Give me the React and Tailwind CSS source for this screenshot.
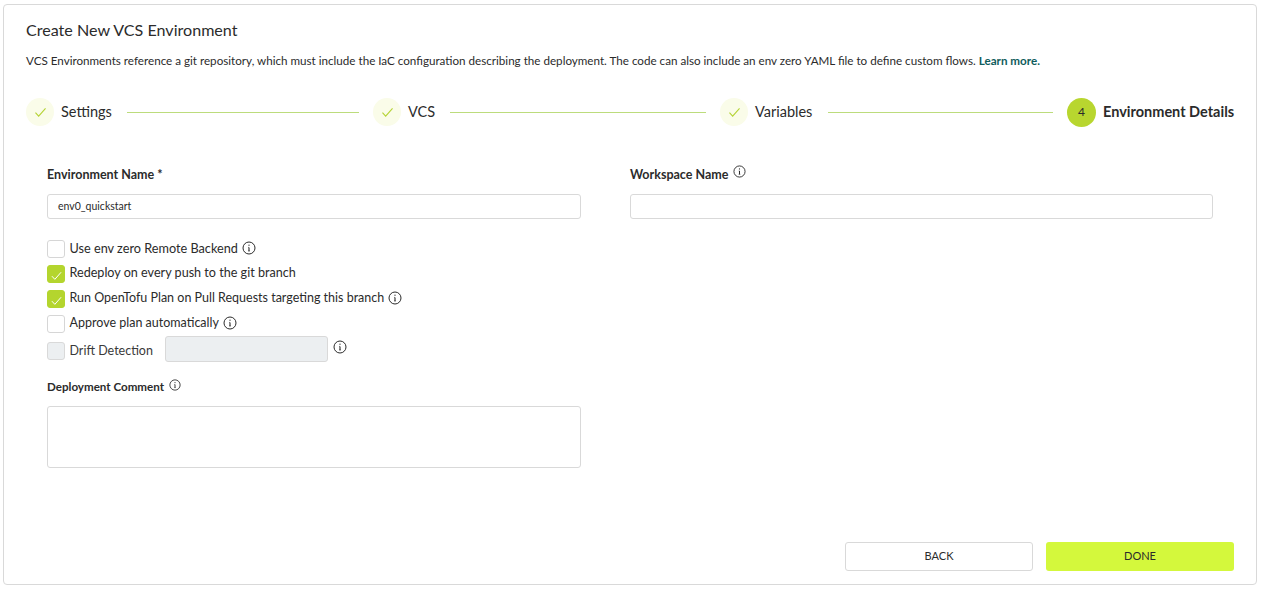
function Info({ className = "" }) {
  return (
    <svg viewBox="0 0 14 14" className={`shrink-0 ${className}`} fill="none" stroke="#2b2b2b" strokeWidth="1">
      <circle cx="7" cy="7" r="6" />
      <path d="M7 6.4v3.6" strokeWidth="1.1" />
      <path d="M6.2 6.4H7M6.1 10h1.8" strokeWidth="0.7" />
      <circle cx="7" cy="4.2" r="0.65" fill="#2b2b2b" stroke="none" />
    </svg>
  );
}

function Check({ className = "", color = "#b5d335" }) {
  return (
    <svg viewBox="0 0 14 12" className={className} fill="none" stroke={color} strokeWidth="1.2">
      <path d="M1.5 6.2 5 10 12.5 1.5" />
    </svg>
  );
}

function DoneStep({ label, labelWidth }) {
  return (
    <div className="flex items-center shrink-0">
      <div className="w-[28px] h-[28px] rounded-full bg-[#fafce9] flex items-center justify-center">
        <Check className="w-[13px] h-[11px]" />
      </div>
      <span className={`ml-[7px] text-[14.5px] leading-[20px] text-[#2b2b2b] ${labelWidth}`}>{label}</span>
    </div>
  );
}

function Box({ checked, disabled, className = "" }) {
  return (
    <span
      className={`w-[18px] h-[18px] rounded-[3px] shrink-0 flex items-center justify-center border ${
        checked
          ? "bg-[#b4d52e] border-[#b4d52e]"
          : disabled
          ? "bg-[#eceff1] border-[#d9d9d9]"
          : "bg-white border-[#d6d6d6]"
      } ${className}`}
    >
      {checked && <Check className="w-[13px] h-[10px] mt-[4px]" color="#ffffff" />}
    </span>
  );
}

function CheckRow({ label, checked, info, size = "text-[12.6px]" }) {
  return (
    <div className="flex items-center h-[25px]">
      <Box checked={checked} />
      <span className={`ml-[4.5px] text-[#2b2b2b] ${size}`}>{label}</span>
      {info && <Info className="ml-[4px] -mt-[2px] w-[14px] h-[14px]" />}
    </div>
  );
}

export default function App() {
  return (
    <div className="w-[1266px] h-[589px] bg-white pt-[4px] pl-[3px] font-['Lato','Liberation_Sans',sans-serif] overflow-hidden">
      <div className="w-[1254px] h-[581px] border border-[#d9d9d9] rounded-[4px] flex flex-col">
        <div className="pl-[22px] pt-[15px]">
          <h1 className="text-[16.1px] leading-[20px] font-normal text-[#2b2b2b]">Create New VCS Environment</h1>
          <p className="mt-[13px] text-[11.65px] leading-[16px] text-[#2b2b2b] whitespace-nowrap">
            VCS Environments reference a git repository, which must include the IaC configuration describing the deployment. The code can also include an env zero YAML file to define custom flows.{" "}
            <span className="font-bold text-[#0f5c5c]">Learn more.</span>
          </p>
        </div>

        <div className="flex items-center pl-[22px] mt-[28px] h-[30px]">
          <DoneStep label="Settings" labelWidth="w-[66px]" />
          <div className="h-px w-[232px] bg-[#bcdc7c]" />
          <div className="w-[14px]" />
          <DoneStep label="VCS" labelWidth="w-[42px]" />
          <div className="h-px w-[256px] bg-[#bcdc7c]" />
          <div className="w-[14px]" />
          <DoneStep label="Variables" labelWidth="w-[73px]" />
          <div className="h-px w-[225px] bg-[#bcdc7c]" />
          <div className="w-[14px]" />
          <div className="flex items-center shrink-0">
            <div className="w-[29px] h-[29px] rounded-full bg-[#b8d62f] flex items-center justify-center text-[12px] text-[#2b2b2b]">4</div>
            <span className="ml-[7px] text-[14.5px] leading-[20px] font-bold text-[#2b2b2b] whitespace-nowrap">Environment Details</span>
          </div>
        </div>

        <div className="flex pl-[43px] mt-[40px] gap-[49px]">
          <div className="w-[534px]">
            <label className="block text-[12.5px] leading-[16px] font-bold text-[#2b2b2b]">Environment Name *</label>
            <div className="mt-[11px] h-[25px] border border-[#d9d9d9] rounded-[3px] flex items-center pl-[10px] text-[10.5px] text-[#2b2b2b]">env0_quickstart</div>
            <div className="mt-[17px]">
              <CheckRow label="Use env zero Remote Backend" size="text-[12.7px]" info />
              <CheckRow label="Redeploy on every push to the git branch" checked />
              <CheckRow label="Run OpenTofu Plan on Pull Requests targeting this branch" size="text-[12.5px]" checked info />
              <CheckRow label="Approve plan automatically" size="text-[12.5px]" info />
            </div>
            <div className="flex items-center h-[26px]">
              <Box disabled className="mt-[4px]" />
              <span className="ml-[4.5px] mt-[5px] w-[95.5px] text-[12.5px] text-[#3a3a3a]">Drift Detection</span>
              <div className="w-[163px] h-[26px] bg-[#eceff1] border border-[#d9d9d9] rounded-[3px]" />
              <Info className="ml-[5px] -mt-[5px] w-[14px] h-[14px]" />
            </div>
            <div className="flex items-center mt-[17px] h-[16px]">
              <label className="text-[11.6px] font-bold text-[#2b2b2b]">Deployment Comment</label>
              <Info className="ml-[5px] -mt-[5px] w-[12px] h-[12px]" />
            </div>
            <div className="mt-[11px] h-[62px] border border-[#d9d9d9] rounded-[3px]" />
          </div>

          <div className="w-[583px]">
            <div className="flex items-center h-[16px]">
              <label className="text-[12.5px] font-bold text-[#2b2b2b]">Workspace Name</label>
              <Info className="ml-[5px] -mt-[7px] w-[13px] h-[13px]" />
            </div>
            <div className="mt-[11px] h-[25px] border border-[#d9d9d9] rounded-[3px]" />
          </div>
        </div>

        <div className="mt-auto mb-[13px] flex justify-end pr-[22px] gap-[13px]">
          <button className="w-[188px] h-[29px] border border-[#d9d9d9] rounded-[3px] bg-white text-[11px] text-[#2b2b2b]">BACK</button>
          <button className="w-[188px] h-[29px] rounded-[3px] bg-[#d4f83c] text-[11px] text-[#2b2b2b]">DONE</button>
        </div>
      </div>
    </div>
  );
}
